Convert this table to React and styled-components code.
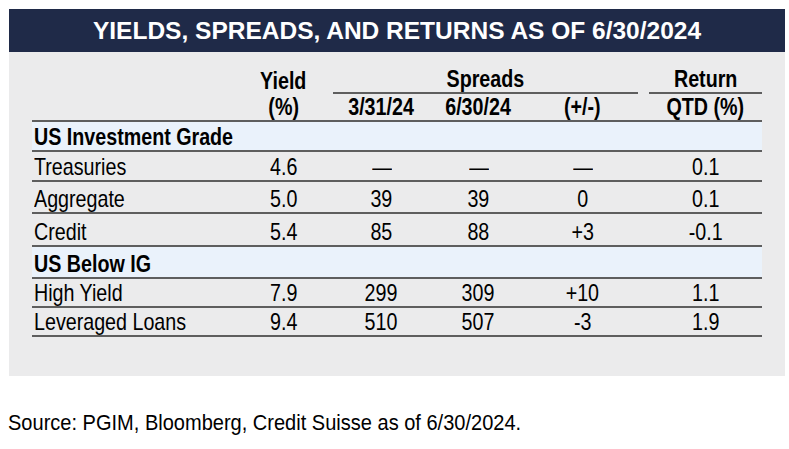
import React from 'react';
import styled, { createGlobalStyle, css } from 'styled-components';

const COLS = '202px 99px 97px 97px 111px 11px 113px';

const GlobalStyle = createGlobalStyle`
  body {
    margin: 0;
    background: #ffffff;
    font-family: 'Liberation Sans', Arial, sans-serif;
    color: #000;
  }
`;

const Page = styled.div`
  padding: 9px 0 0 9px;
  width: 776px;
`;

const TitleBar = styled.div`
  height: 43px;
  background: #1f2a48;
  color: #fff;
  font-weight: 700;
  font-size: 24.5px;
  line-height: 43px;
  text-align: center;
  white-space: nowrap;
`;

const Panel = styled.div`
  background: #ebebec;
  padding: 14px 23px 39px;
`;

const Row = styled.div`
  display: grid;
  grid-template-columns: ${COLS};
  align-items: end;
  box-sizing: border-box;
  height: ${({ h }) => h}px;
  font-size: 24px;
  line-height: 26px;
  ${({ ruled }) =>
    ruled &&
    css`
      border-bottom: 2px solid #5e5e5e;
    `}
  ${({ section }) =>
    section &&
    css`
      background: #eaf2fb;
      font-weight: 700;
    `}
`;

const HeadRow = styled(Row)`
  font-weight: 700;
`;

const Cell = styled.div`
  text-align: ${({ left }) => (left ? 'left' : 'center')};
  padding-left: ${({ left }) => (left ? '2px' : '0')};
  white-space: nowrap;
  ${({ span }) =>
    span &&
    css`
      grid-column: span ${span};
    `}
  ${({ underline }) =>
    underline &&
    css`
      border-bottom: 2px solid #5e5e5e;
    `}
`;

// the source uses a condensed Arial; squeeze Liberation Sans to match
const Narrow = styled.span`
  display: inline-block;
  transform: scaleX(${({ k }) => k || 0.82});
  transform-origin: ${({ left }) => (left ? 'left' : 'center')} center;
`;

const Source = styled.p`
  margin: 34px 0 0 -1px;
  font-size: 22.5px;
  line-height: 26px;
  white-space: nowrap;
`;

const rows = [
  { section: 'US Investment Grade', h: 30 },
  { label: 'Treasuries', vals: ['4.6', '—', '—', '—', '0.1'], h: 30 },
  { label: 'Aggregate', vals: ['5.0', '39', '39', '0', '0.1'], h: 32 },
  { label: 'Credit', vals: ['5.4', '85', '88', '+3', '-0.1'], h: 33 },
  { section: 'US Below IG', h: 32 },
  { label: 'High Yield', vals: ['7.9', '299', '309', '+10', '1.1'], h: 29 },
  { label: 'Leveraged Loans', vals: ['9.4', '510', '507', '-3', '1.9'], h: 29 },
];

const Val = ({ children }) => (
  <Cell>
    <Narrow>{children}</Narrow>
  </Cell>
);

const App = () => (
  <Page>
    <GlobalStyle />
    <TitleBar>YIELDS, SPREADS, AND RETURNS AS OF 6/30/2024</TitleBar>
    <Panel>
      <HeadRow h={28}>
        <Cell />
        <Val>Yield</Val>
        <Cell span={3} underline>
          <Narrow>Spreads</Narrow>
        </Cell>
        <Cell />
        <Cell underline>
          <Narrow>Return</Narrow>
        </Cell>
      </HeadRow>
      <HeadRow h={28} ruled>
        <Cell />
        <Val>(%)</Val>
        <Val>3/31/24</Val>
        <Val>6/30/24</Val>
        <Val>(+/-)</Val>
        <Cell />
        <Val>QTD (%)</Val>
      </HeadRow>
      {rows.map((r) =>
        r.section ? (
          <Row key={r.section} h={r.h} ruled section>
            <Cell left span={7}>
              <Narrow left>{r.section}</Narrow>
            </Cell>
          </Row>
        ) : (
          <Row key={r.label} h={r.h} ruled>
            <Cell left>
              <Narrow left>{r.label}</Narrow>
            </Cell>
            <Val>{r.vals[0]}</Val>
            <Val>{r.vals[1]}</Val>
            <Val>{r.vals[2]}</Val>
            <Val>{r.vals[3]}</Val>
            <Cell />
            <Val>{r.vals[4]}</Val>
          </Row>
        ),
      )}
    </Panel>
    <Source>
      <Narrow left k={0.89}>
        Source: PGIM, Bloomberg, Credit Suisse as of 6/30/2024.
      </Narrow>
    </Source>
  </Page>
);

export default App;
